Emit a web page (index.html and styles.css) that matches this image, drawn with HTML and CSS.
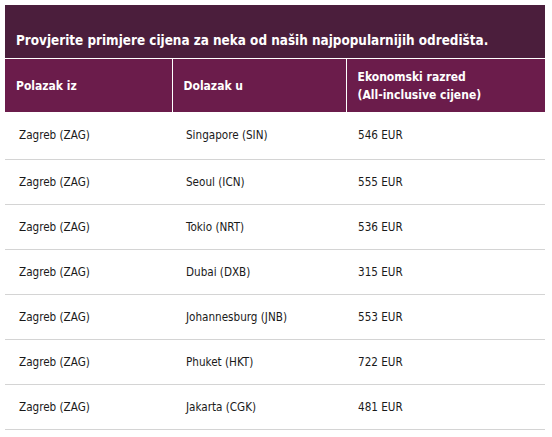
FILE: index.html
```html
<!DOCTYPE html>
<html>
<head>
<meta charset="utf-8">
<link rel="stylesheet" href="styles.css">
</head>
<body>
<div class="wrap">
  <div class="title">Provjerite primjere cijena za neka od naših najpopularnijih odredišta.</div>
  <table class="prices">
    <thead>
      <tr>
        <th class="c1">Polazak iz</th>
        <th class="c2">Dolazak u</th>
        <th class="c3">Ekonomski razred<br>(All-inclusive cijene)</th>
      </tr>
    </thead>
    <tbody>
      <tr><td>Zagreb (ZAG)</td><td>Singapore (SIN)</td><td>546 EUR</td></tr>
      <tr><td>Zagreb (ZAG)</td><td>Seoul (ICN)</td><td>555 EUR</td></tr>
      <tr><td>Zagreb (ZAG)</td><td>Tokio (NRT)</td><td>536 EUR</td></tr>
      <tr><td>Zagreb (ZAG)</td><td>Dubai (DXB)</td><td>315 EUR</td></tr>
      <tr><td>Zagreb (ZAG)</td><td>Johannesburg (JNB)</td><td>553 EUR</td></tr>
      <tr><td>Zagreb (ZAG)</td><td>Phuket (HKT)</td><td>722 EUR</td></tr>
      <tr><td>Zagreb (ZAG)</td><td>Jakarta (CGK)</td><td>481 EUR</td></tr>
    </tbody>
  </table>
</div>
</body>
</html>
```
FILE: styles.css
```css
html, body {
  margin: 0;
  padding: 0;
  background: #ffffff;
}
body {
  font-family: "DejaVu Sans Condensed", "DejaVu Sans", sans-serif;
  color: #222222;
}
.wrap {
  padding: 5px 7px 0 5px;
}
.title {
  background: #4b1e3c;
  color: #ffffff;
  font-weight: bold;
  font-size: 13.4px;
  height: 54px;
  box-sizing: border-box;
  padding: 28px 0 0 11px;
  line-height: 16px;
  white-space: nowrap;
  border-bottom: 1px solid #ffffff;
}
.prices {
  width: 540px;
  border-collapse: collapse;
  font-size: 11.6px;
}
.prices th {
  background: #6b1c4b;
  color: #ffffff;
  font-weight: bold;
  font-size: 12px;
  text-align: left;
  height: 53px;
  padding: 0 0 0 11px;
  line-height: 18px;
  border-left: 1px solid #ffffff;
  box-sizing: border-box;
}
.prices th.c1 { width: 167px; border-left: none; }
.prices th.c2 { width: 174px; }
.prices th.c3 { padding-left: 11px; }
.prices td {
  height: 45px;
  padding: 0 0 0 14px;
  border-bottom: 1px solid #d4d4d4;
  color: #1a1a1a;
  box-sizing: border-box;
}
.prices td:nth-child(3) { padding-left: 12px; }
.prices tbody tr:first-child td { height: 47px; }
```
